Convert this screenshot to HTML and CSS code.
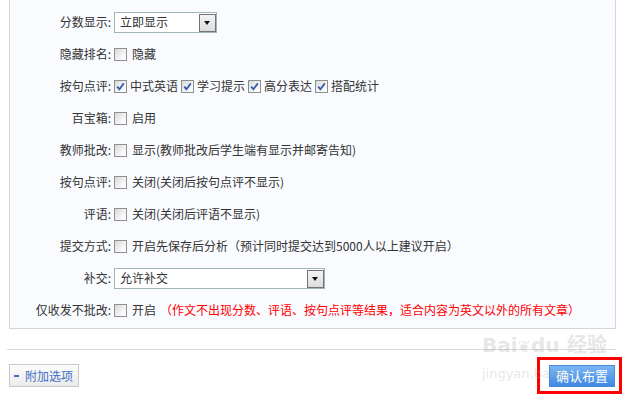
FILE: index.html
```html
<!DOCTYPE html>
<html lang="zh-CN">
<head>
<meta charset="utf-8">
<link rel="stylesheet" href="styles.css">
</head>
<body>
<div class="page">
  <div class="panel">
    <div class="row">
      <span class="lbl">分数显示:</span>
      <div class="select sel-short"><span class="sel-text">立即显示</span><span class="sel-arrow"></span></div>
    </div>
    <div class="row">
      <span class="lbl">隐藏排名:</span>
      <span class="cb"></span><span class="opt">隐藏</span>
    </div>
    <div class="row">
      <span class="lbl">按句点评:</span>
      <span class="cb checked"><svg viewBox="0 0 11 11" width="11" height="11"><path d="M2.2 5.6 L4.4 8.2 L8.8 2.4" fill="none" stroke="#3a5cae" stroke-width="1.8"/></svg></span><span class="opt-c">中式英语</span>
      <span class="cb checked"><svg viewBox="0 0 11 11" width="11" height="11"><path d="M2.2 5.6 L4.4 8.2 L8.8 2.4" fill="none" stroke="#3a5cae" stroke-width="1.8"/></svg></span><span class="opt-c">学习提示</span>
      <span class="cb checked"><svg viewBox="0 0 11 11" width="11" height="11"><path d="M2.2 5.6 L4.4 8.2 L8.8 2.4" fill="none" stroke="#3a5cae" stroke-width="1.8"/></svg></span><span class="opt-c">高分表达</span>
      <span class="cb checked"><svg viewBox="0 0 11 11" width="11" height="11"><path d="M2.2 5.6 L4.4 8.2 L8.8 2.4" fill="none" stroke="#3a5cae" stroke-width="1.8"/></svg></span><span class="opt-c">搭配统计</span>
    </div>
    <div class="row">
      <span class="lbl">百宝箱:</span>
      <span class="cb"></span><span class="opt">启用</span>
    </div>
    <div class="row">
      <span class="lbl">教师批改:</span>
      <span class="cb"></span><span class="opt">显示(教师批改后学生端有显示并邮寄告知)</span>
    </div>
    <div class="row">
      <span class="lbl">按句点评:</span>
      <span class="cb"></span><span class="opt">关闭(关闭后按句点评不显示)</span>
    </div>
    <div class="row">
      <span class="lbl">评语:</span>
      <span class="cb"></span><span class="opt">关闭(关闭后评语不显示)</span>
    </div>
    <div class="row">
      <span class="lbl">提交方式:</span>
      <span class="cb"></span><span class="opt">开启先保存后分析（预计同时提交达到5000人以上建议开启）</span>
    </div>
    <div class="row">
      <span class="lbl">补交:</span>
      <div class="select sel-long"><span class="sel-text">允许补交</span><span class="sel-arrow"></span></div>
    </div>
    <div class="row">
      <span class="lbl">仅收发不批改:</span>
      <span class="cb"></span><span class="opt">开启</span><span class="note">（作文不出现分数、评语、按句点评等结果，适合内容为英文以外的所有文章）</span>
    </div>
  </div>
  <div class="divider"></div>
  <div class="bar">
    <button class="btn-extra"><span class="minus"></span>附加选项</button>
    <div class="highlight"><button class="btn-confirm">确认布置</button></div>
  </div>
  <div class="watermark">
    <span class="wm-big">Bai<span class="wm-paw">&#x2766;</span>du 经验</span>
    <span class="wm-small">jingyan.baidu</span>
  </div>
</div>
</body>
</html>
```
FILE: styles.css
```css
* { box-sizing: border-box; }
html, body { margin: 0; padding: 0; background: #fff; }
body {
  font-family: "Noto Sans CJK SC", "Microsoft YaHei", sans-serif;
  font-size: 12px;
  color: #333;
}
.page {
  position: relative;
  width: 629px;
  height: 399px;
  overflow: hidden;
}
.panel {
  margin-left: 9px;
  width: 607px;
  border: 1px solid #d6d6d6;
  border-top: none;
  background: #f9fbff;
  padding: 6px 0 2px 0;
}
.row {
  height: 32px;
  display: flex;
  align-items: center;
  white-space: nowrap;
}
.lbl {
  width: 101px;
  text-align: right;
  margin-right: 3px;
  line-height: 14px;
}
.cb {
  width: 13px;
  height: 13px;
  border: 1px solid #8d8f8f;
  background: linear-gradient(135deg, #d9d9d9 0%, #f4f4f4 60%, #ffffff 100%);
  display: inline-flex;
  align-items: center;
  justify-content: center;
  flex: none;
}
.cb svg { display: block; }
.opt { margin-left: 5px; line-height: 14px; }
.opt-c { margin-left: 3px; margin-right: 3px; line-height: 14px; }
.note { color: #ff0000; margin-left: 4px; line-height: 14px; }
.select {
  height: 21px;
  border: 1px solid #a3b5af;
  background: #fff;
  display: flex;
  align-items: center;
  justify-content: space-between;
  padding-left: 5px;
}
.sel-short { width: 103px; }
.sel-long { width: 211px; }
.sel-text { line-height: 14px; }
.sel-arrow {
  width: 17px;
  height: 18px;
  border: 1px solid #737373;
  background: linear-gradient(#f4f4f4, #dcdcdc);
  position: relative;
  align-self: flex-end;
}
.sel-arrow::after {
  content: "";
  position: absolute;
  left: 4px;
  top: 6px;
  border-left: 3.5px solid transparent;
  border-right: 3.5px solid transparent;
  border-top: 4px solid #111;
}
.divider {
  margin: 20px 0 0 7px;
  width: 609px;
  height: 1px;
  background: #d9d9d9;
}
.bar {
  margin-top: 7px;
  padding: 0 7px 0 9px;
  display: flex;
  justify-content: space-between;
  align-items: center;
}
.btn-extra {
  width: 70px;
  height: 23px;
  border: 1px solid #cacaca;
  background: linear-gradient(#fdfdfd, #ebebeb);
  font-family: inherit;
  font-size: 12px;
  color: #3f6fc4;
  display: flex;
  align-items: center;
  padding: 0 0 0 4px;
  margin: 0;
}
.minus {
  width: 5px;
  height: 2px;
  background: #3f6fc4;
  margin-right: 6px;
}
.highlight {
  width: 85px;
  height: 37px;
  border: 3px solid #ff0000;
  padding: 5px 4px 4px 9px;
}
.btn-confirm {
  width: 66px;
  height: 22px;
  margin: 0;
  padding: 0;
  border: 1px solid #4a8ad9;
  background: linear-gradient(#7ab6f4, #3f88e2);
  color: #fff;
  font-family: inherit;
  font-size: 13px;
  line-height: 20px;
}
.watermark {
  position: absolute;
  left: 482px;
  top: 332px;
  width: 112px;
  pointer-events: none;
  color: rgba(170, 170, 170, 0.3);
  display: flex;
  flex-direction: column;
}
.wm-big {
  font-family: "DejaVu Sans", sans-serif;
  font-size: 20px;
  font-weight: bold;
  line-height: 26px;
  white-space: nowrap;
}
.wm-paw { font-size: 16px; }
.wm-small {
  font-family: "DejaVu Sans", sans-serif;
  font-size: 13px;
  line-height: 16px;
  margin-top: 6px;
  white-space: nowrap;
}
```
